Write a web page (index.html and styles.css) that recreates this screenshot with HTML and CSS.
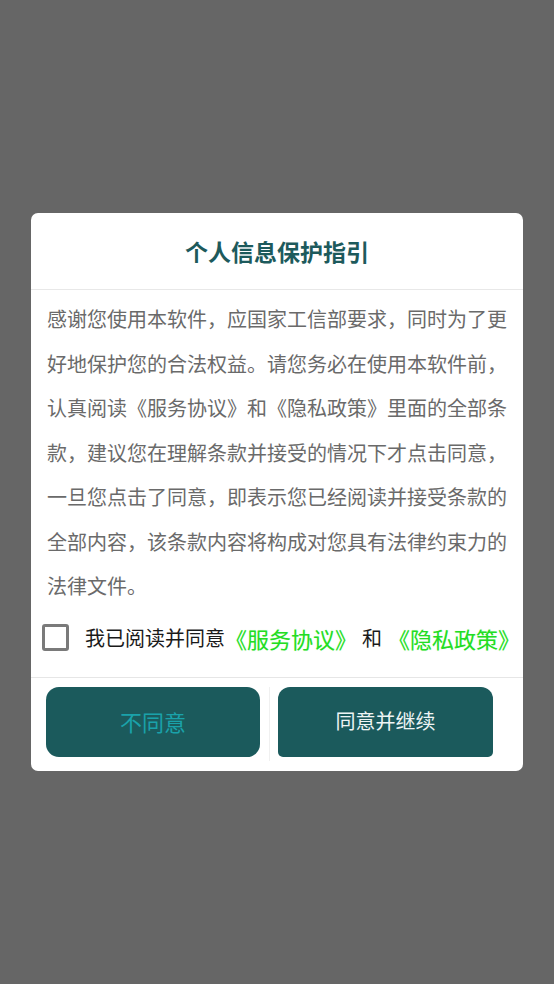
FILE: index.html
```html
<!DOCTYPE html>
<html lang="zh-CN">
<head>
<meta charset="utf-8">
<title>个人信息保护指引</title>
<link rel="stylesheet" href="styles.css">
</head>
<body>
<div class="screen">
  <div class="dialog">
    <div class="title">个人信息保护指引</div>
    <div class="body">感谢您使用本软件，应国家工信部要求，同时为了更好地保护您的合法权益。请您务必在使用本软件前，认真阅读《服务协议》和《隐私政策》里面的全部条款，建议您在理解条款并接受的情况下才点击同意，一旦您点击了同意，即表示您已经阅读并接受条款的全部内容，该条款内容将构成对您具有法律约束力的法律文件。</div>
    <div class="agree">
      <span class="check"></span>
      <span class="label">我已阅读并同意</span><span class="link l1">《服务协议》</span><span class="and">和</span><span class="link l2">《隐私政策》</span>
    </div>
    <div class="actions">
      <button class="btn btn-no">不同意</button>
      <span class="vsep"></span>
      <button class="btn btn-yes">同意并继续</button>
    </div>
  </div>
</div>
</body>
</html>
```
FILE: styles.css
```css
html, body {
  margin: 0;
  padding: 0;
  background: #666666;
}
body {
  font-family: "Noto Sans CJK SC", "Noto Sans", sans-serif;
}
.screen {
  width: 554px;
  height: 984px;
  display: flex;
  flex-direction: column;
  align-items: flex-start;
  padding-top: 213px;
  box-sizing: border-box;
}
.dialog {
  margin-left: 31px;
  width: 492px;
  height: 558px;
  background: #ffffff;
  border-radius: 7px;
  display: flex;
  flex-direction: column;
  overflow: hidden;
}
.title {
  height: 76px;
  border-bottom: 1px solid #e8e8e8;
  display: flex;
  align-items: center;
  justify-content: center;
  font-size: 23px;
  font-weight: bold;
  color: #1d5a5c;
  line-height: 1;
}
.body {
  padding: 7px 14px 0 16px;
  font-size: 20px;
  line-height: 44.5px;
  color: #6a6a6a;
}
.agree {
  height: 58px;
  margin-top: 0;
  margin-bottom: 10px;
  display: flex;
  align-items: center;
  padding-left: 11px;
  white-space: nowrap;
}
.check {
  width: 21px;
  height: 21px;
  border: 3px solid #7a7a7a;
  border-radius: 3px;
  flex: none;
  margin-right: 16px;
}
.label {
  font-size: 20px;
  color: #1a1a1a;
}
.and {
  font-size: 20px;
  color: #1a1a1a;
  margin-left: 5px;
  margin-right: 6px;
}
.link {
  font-size: 22px;
  color: #22dd22;
  text-shadow: 0 0 1px rgba(120, 240, 120, 0.5);
}
.actions {
  border-top: 1px solid #e6e6e6;
  display: flex;
  align-items: flex-start;
  padding: 9px 30px 0 15px;
  flex: 1;
}
.btn {
  height: 70px;
  border: none;
  background: #1b5a5c;
  font-family: "Noto Sans CJK SC", "Noto Sans", sans-serif;
  font-size: 20px;
  padding: 0 0 2px 0;
  display: flex;
  align-items: center;
  justify-content: center;
}
.btn-no {
  width: 214px;
  border-radius: 13px;
  color: #1aa2aa;
  font-size: 22px;
}
.btn-yes {
  width: 215px;
  border-radius: 12px 12px 5px 5px;
  color: #eef5f5;
}
.vsep {
  width: 1px;
  height: 74px;
  background: #f0f0f0;
  margin: 0 8px 0 9px;
}
```
